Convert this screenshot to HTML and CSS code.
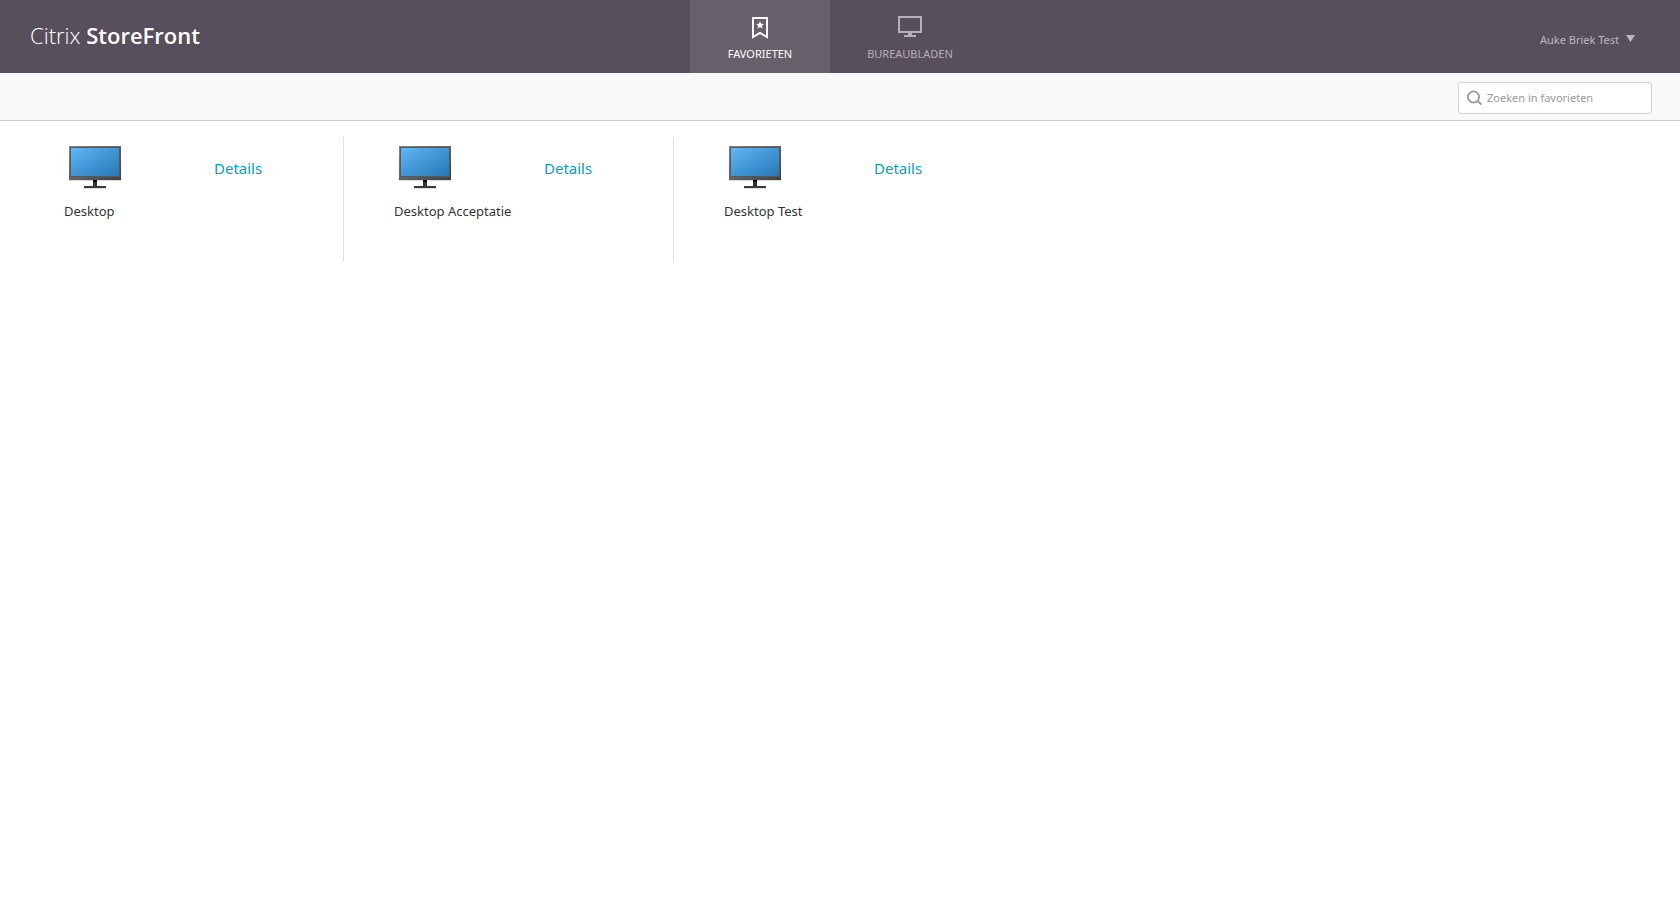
FILE: index.html
```html
<!DOCTYPE html>
<html lang="nl">
<head>
<meta charset="utf-8">
<title>Citrix StoreFront</title>
<link rel="stylesheet" href="styles.css">
</head>
<body>
<svg class="defs" width="0" height="0" aria-hidden="true">
  <defs>
    <linearGradient id="screen" x1="0" y1="0" x2="1" y2="1">
      <stop offset="0" stop-color="#62b8f6"/>
      <stop offset="0.5" stop-color="#4197d5"/>
      <stop offset="1" stop-color="#2678b4"/>
    </linearGradient>
    <linearGradient id="bezel" x1="0" y1="0" x2="1" y2="1">
      <stop offset="0" stop-color="#868686"/>
      <stop offset="1" stop-color="#404040"/>
    </linearGradient>
    <symbol id="monitor" viewBox="0 0 64 64">
      <path d="M4 16h54v23H4z" fill="#000" opacity="0.04"/>
      <path d="M5 38h52v2H5z" fill="#000" opacity="0.14"/>
      <path d="M20 47h22v1H20z" fill="#000" opacity="0.12"/>
      <path d="M5 5h52v34H5z" fill="url(#bezel)"/>
      <path d="M6 6h50v30H6z" fill="#55595c"/>
      <path d="M7 7h48v28H7z" fill="url(#screen)"/>
      <path d="M29 39h4v6h-4z" fill="#333"/>
      <path d="M29 39h4v2h-4z" fill="#000"/>
      <path d="M20 45h22v2H20z" fill="#3b3b3b"/>
    </symbol>
  </defs>
</svg>
<header class="header">
  <h1 class="logo">Citrix <strong>StoreFront</strong></h1>
  <nav class="tabs">
    <a class="tab tab-active" href="#favorieten">
      <svg class="tab-icon" width="24" height="24" viewBox="0 0 24 24" aria-hidden="true">
        <path d="M5 3h14v19l-7-4-7 4z" fill="none" stroke="currentColor" stroke-width="2"/>
        <path d="M12 6l1.100 2.700 2.900.2-2.200 1.900.7 2.900-2.500-1.600-2.500 1.600.7-2.900L8 8.900l2.900-.2z" fill="currentColor"/>
      </svg>
      <span>FAVORIETEN</span>
    </a>
    <a class="tab" href="#bureaubladen">
      <svg class="tab-icon" width="24" height="24" viewBox="0 0 24 24" aria-hidden="true">
        <path d="M1 2h22v15H1z" fill="none" stroke="currentColor" stroke-width="2"/>
        <path d="M10 18h4v2h4v2H6v-2h4z" fill="currentColor"/>
      </svg>
      <span>BUREAUBLADEN</span>
    </a>
  </nav>
  <button class="user" type="button">Auke Briek Test
    <svg width="9" height="7" viewBox="0 0 9 7" aria-hidden="true"><path d="M0 0h9L4.500 7z" fill="currentColor"/></svg>
  </button>
</header>
<div class="toolbar">
  <label class="search">
    <svg width="16" height="16" viewBox="0 0 16 16" aria-hidden="true">
      <circle cx="6.500" cy="7" r="5.600" fill="none" stroke="#999" stroke-width="1.800"/>
      <path d="M10.500 11l4 3.500" stroke="#999" stroke-width="2"/>
    </svg>
    <input class="search-input" type="text" placeholder="Zoeken in favorieten" aria-label="Zoeken in favorieten">
  </label>
</div>
<main>
  <ul class="tiles">
    <li class="tile">
      <div class="tile-top">
        <svg width="64" height="64" aria-hidden="true"><use href="#monitor"/></svg>
        <a class="details" href="#desktop">Details</a>
      </div>
      <p class="name">Desktop</p>
    </li>
    <li class="tile">
      <div class="tile-top">
        <svg width="64" height="64" aria-hidden="true"><use href="#monitor"/></svg>
        <a class="details" href="#desktop-acceptatie">Details</a>
      </div>
      <p class="name">Desktop Acceptatie</p>
    </li>
    <li class="tile">
      <div class="tile-top">
        <svg width="64" height="64" aria-hidden="true"><use href="#monitor"/></svg>
        <a class="details" href="#desktop-test">Details</a>
      </div>
      <p class="name">Desktop Test</p>
    </li>
  </ul>
</main>
</body>
</html>
```
FILE: styles.css
```css
* {
  box-sizing: border-box;
}

body {
  margin: 0;
  background: #fff;
  color: #333;
  font-family: "Noto Sans", "Open Sans", sans-serif;
}

.defs {
  position: absolute;
}

.header {
  display: grid;
  grid-template-columns: 1fr auto 1fr;
  height: 73px;
  background: #574f5b;
}

.logo {
  margin: 0;
  padding: 19px 0 0 30px;
  color: #fff;
  font-family: "Open Sans", "Noto Sans", sans-serif;
  font-size: 22px;
  line-height: 32px;
  font-weight: 300;
}

.logo strong {
  font-weight: 600;
}

.tabs {
  display: flex;
}

.tab {
  display: flex;
  flex-direction: column;
  align-items: center;
  width: 140px;
  padding-top: 15px;
  color: #b5b1b7;
  font-size: 11px;
  line-height: 16px;
  text-decoration: none;
}

.tab + .tab {
  width: 160px;
}

.tab-icon {
  margin-bottom: 7px;
}

.tab-active {
  background: #68606b;
  color: #fff;
}

.user {
  display: flex;
  align-items: center;
  align-self: start;
  justify-self: end;
  gap: 7px;
  margin: 32px 45px 0 0;
  padding: 0;
  border: 0;
  background: none;
  color: #bcb9bd;
  font: 11px/16px "Noto Sans", "Open Sans", sans-serif;
}

.user svg {
  margin-bottom: 4px;
}

.toolbar {
  display: flex;
  justify-content: flex-end;
  align-items: center;
  height: 48px;
  padding: 2px 28px 0 0;
  border-bottom: 1px solid #ccc;
  background: #f9f9f9;
}

.search {
  display: flex;
  align-items: center;
  gap: 4px;
  width: 194px;
  height: 32px;
  padding-left: 8px;
  border: 1px solid #d3d3d3;
  border-radius: 3px;
  background: #fff;
}

.search-input {
  flex: 1;
  min-width: 0;
  padding: 1px 0 0;
  border: 0;
  outline: 0;
  background: none;
  color: #333;
  font: 11px/16px "Noto Sans", "Open Sans", sans-serif;
}

.search-input::placeholder {
  color: #999;
  opacity: 1;
}

.tiles {
  display: flex;
  flex-wrap: wrap;
  margin: 0;
  padding: 16px 14px;
  list-style: none;
}

.tile {
  width: 330px;
  height: 125px;
  padding: 4px 0 0 50px;
  border-right: 1px solid #e1e1e1;
}

.tile:last-child {
  border-right: 0;
}

.tile-top {
  display: flex;
  gap: 86px;
  height: 60px;
}

.details {
  padding-top: 15px;
  color: #02a1c1;
  font-size: 15px;
  line-height: 24px;
  text-decoration: none;
}

.name {
  margin: 0;
  font-size: 13px;
  line-height: 20px;
}
```
